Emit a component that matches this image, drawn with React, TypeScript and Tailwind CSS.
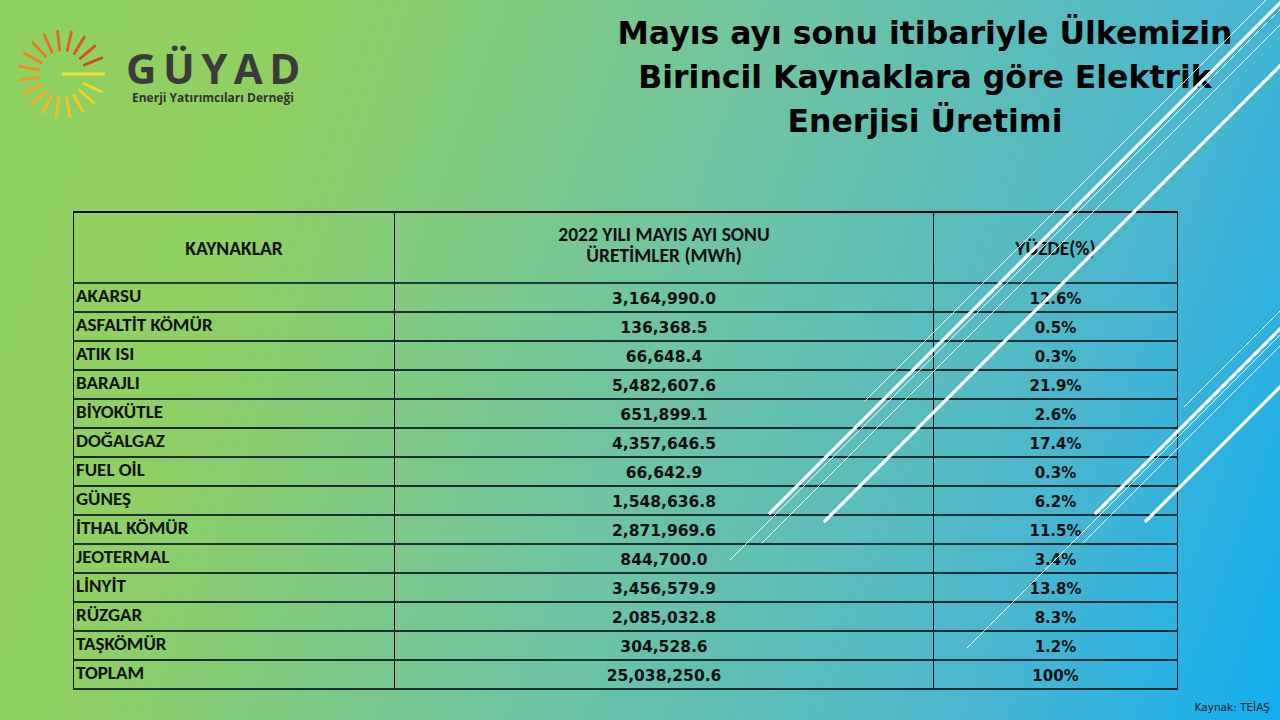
import React from "react";

const rows: [string, string, string][] = [
  ["AKARSU", "3,164,990.0", "12.6%"],
  ["ASFALTİT KÖMÜR", "136,368.5", "0.5%"],
  ["ATIK ISI", "66,648.4", "0.3%"],
  ["BARAJLI", "5,482,607.6", "21.9%"],
  ["BİYOKÜTLE", "651,899.1", "2.6%"],
  ["DOĞALGAZ", "4,357,646.5", "17.4%"],
  ["FUEL OİL", "66,642.9", "0.3%"],
  ["GÜNEŞ", "1,548,636.8", "6.2%"],
  ["İTHAL KÖMÜR", "2,871,969.6", "11.5%"],
  ["JEOTERMAL", "844,700.0", "3.4%"],
  ["LİNYİT", "3,456,579.9", "13.8%"],
  ["RÜZGAR", "2,085,032.8", "8.3%"],
  ["TAŞKÖMÜR", "304,528.6", "1.2%"],
  ["TOPLAM", "25,038,250.6", "100%"],
];

function lerp(a: number, b: number, t: number) {
  return Math.round(a + (b - a) * t);
}

function rayColor(t: number) {
  const stops = [
    [0, [247, 214, 40]],
    [0.35, [243, 178, 32]],
    [0.6, [238, 128, 36]],
    [1, [214, 68, 28]],
  ] as [number, number[]][];
  for (let i = 0; i < stops.length - 1; i++) {
    const [t0, c0] = stops[i];
    const [t1, c1] = stops[i + 1];
    if (t >= t0 && t <= t1) {
      const u = (t - t0) / (t1 - t0);
      return `rgb(${lerp(c0[0], c1[0], u)},${lerp(c0[1], c1[1], u)},${lerp(c0[2], c1[2], u)})`;
    }
  }
  return "rgb(214,68,28)";
}

function Logo() {
  const rays = [];
  const n = 18;
  for (let i = 0; i < n; i++) {
    const deg = 24 + (i * (338 - 24)) / (n - 1);
    const a = (deg * Math.PI) / 180;
    const r1 = 24;
    const r2 = 43;
    rays.push(
      <line
        key={i}
        x1={50 + Math.cos(a) * r1}
        y1={50 + Math.sin(a) * r1}
        x2={50 + Math.cos(a) * r2}
        y2={50 + Math.sin(a) * r2}
        stroke={rayColor(i / (n - 1))}
        strokeWidth={2.8}
        strokeLinecap="round"
      />
    );
  }
  return (
    <svg width="100" height="100" viewBox="0 0 100 100">
      {rays}
      <line x1="50" y1="50" x2="93" y2="50" stroke="#f4e22c" strokeWidth="3" />
    </svg>
  );
}

function Decor() {
  const lines: { x: number; y: number; w: number }[] = [
    { x: 865, y: 401, w: 1 },
    { x: 770, y: 513, w: 3.2 },
    { x: 730, y: 560, w: 1 },
    { x: 762, y: 543, w: 1 },
    { x: 825, y: 521, w: 3.2 },
    { x: 1184, y: 407, w: 1 },
    { x: 1096, y: 513, w: 3.2 },
    { x: 967, y: 648, w: 1 },
    { x: 1083, y: 543, w: 1 },
    { x: 1146, y: 521, w: 3.2 },
  ];
  return (
    <svg
      className="absolute inset-0 pointer-events-none"
      width="1280"
      height="720"
      viewBox="0 0 1280 720"
    >
      {lines.map((l, i) => (
        <line
          key={i}
          x1={l.x}
          y1={l.y}
          x2={l.x + 800}
          y2={l.y - 800}
          stroke="white"
          strokeOpacity={l.w > 2 ? 1 : 0.9}
          strokeWidth={l.w}
          strokeLinecap="round"
        />
      ))}
    </svg>
  );
}

const labelFont = { fontFamily: '"Carlito", "Open Sans", sans-serif' };
const numFont = { fontFamily: '"DejaVu Sans", Verdana, sans-serif' };

export default function App() {
  return (
    <div className="relative w-[1280px] h-[720px] overflow-hidden bg-[linear-gradient(110deg,#8fd160_0%,#8fd062_20%,#70c4a0_50%,#4ab6cf_80%,#12aef1_100%)]">
      <div className="flex items-start h-[143px]">
        <div className="flex items-center pl-[12px] pt-[24px]">
          <Logo />
          <div className="ml-[14px] flex flex-col mt-[2px]">
            <div
              className="text-[42px] leading-[48px] font-bold tracking-[6.5px] text-[#3b3b3b]"
              style={{ fontFamily: '"Open Sans", sans-serif' }}
            >
              GÜYAD
            </div>
            <div
              className="text-[12px] leading-[16px] font-bold text-[#333] -mt-[2px] pl-[6px]"
              style={{ fontFamily: '"Open Sans", sans-serif' }}
            >
              Enerji Yatırımcıları Derneği
            </div>
          </div>
        </div>
        <div
          className="ml-auto w-[710px] pt-[11px] text-center text-[31.5px] leading-[44px] font-bold text-black"
          style={{ fontFamily: '"Century Gothic", "URW Gothic", "DejaVu Sans", sans-serif' }}
        >
          <div>Mayıs ayı sonu itibariyle Ülkemizin</div>
          <div>Birincil Kaynaklara göre Elektrik</div>
          <div>Enerjisi Üretimi</div>
        </div>
      </div>

      <div className="mt-[68px] ml-[73px]">
        <table className="border-collapse table-fixed w-[1104px]">
          <colgroup>
            <col className="w-[321px]" />
            <col className="w-[539px]" />
            <col className="w-[244px]" />
          </colgroup>
          <thead>
            <tr className="h-[71px]">
              <th
                className="border-x border-t-2 border-b-2 border-x-black border-t-black border-b-[#1e3b40] text-[19.5px] leading-[21px] font-bold text-[#111] text-center align-middle pt-[2px]"
                style={labelFont}
              >
                KAYNAKLAR
              </th>
              <th
                className="border-x border-t-2 border-b-2 border-x-black border-t-black border-b-[#1e3b40] text-[19.5px] leading-[21px] font-bold text-[#111] text-center align-middle pb-[6px]"
                style={labelFont}
              >
                2022 YILI MAYIS AYI SONU
                <br />
                ÜRETİMLER (MWh)
              </th>
              <th
                className="border-x border-t-2 border-b-2 border-x-black border-t-black border-b-[#1e3b40] text-[19.5px] leading-[21px] font-bold text-[#111] text-center align-middle pt-[2px]"
                style={labelFont}
              >
                YÜZDE(%)
              </th>
            </tr>
          </thead>
          <tbody>
            {rows.map(([a, b, c], i) => (
              <tr key={i} className="h-[29px]">
                <td
                  className="border-x border-b-2 border-x-black border-b-[#1c2f33] pl-[2px] text-[19px] leading-[20px] font-bold text-[#111] align-middle pb-[3px]"
                  style={labelFont}
                >
                  {a}
                </td>
                <td
                  className="border-x border-b-2 border-x-black border-b-[#1c2f33] text-center text-[15.5px] leading-[20px] font-bold text-[#111] align-middle pt-[2px]"
                  style={numFont}
                >
                  {b}
                </td>
                <td
                  className="border-x border-b-2 border-x-black border-b-[#1c2f33] text-center text-[15px] leading-[20px] font-bold text-[#111] align-middle pt-[2px]"
                  style={numFont}
                >
                  {c}
                </td>
              </tr>
            ))}
          </tbody>
        </table>
      </div>

      <div className="flex justify-end pr-[10px] mt-[10px]">
        <span
          className="text-[10.5px] leading-[14px] text-[#222]"
          style={{ fontFamily: '"DejaVu Sans", sans-serif' }}
        >
          Kaynak: TEİAŞ
        </span>
      </div>

      <Decor />
    </div>
  );
}
